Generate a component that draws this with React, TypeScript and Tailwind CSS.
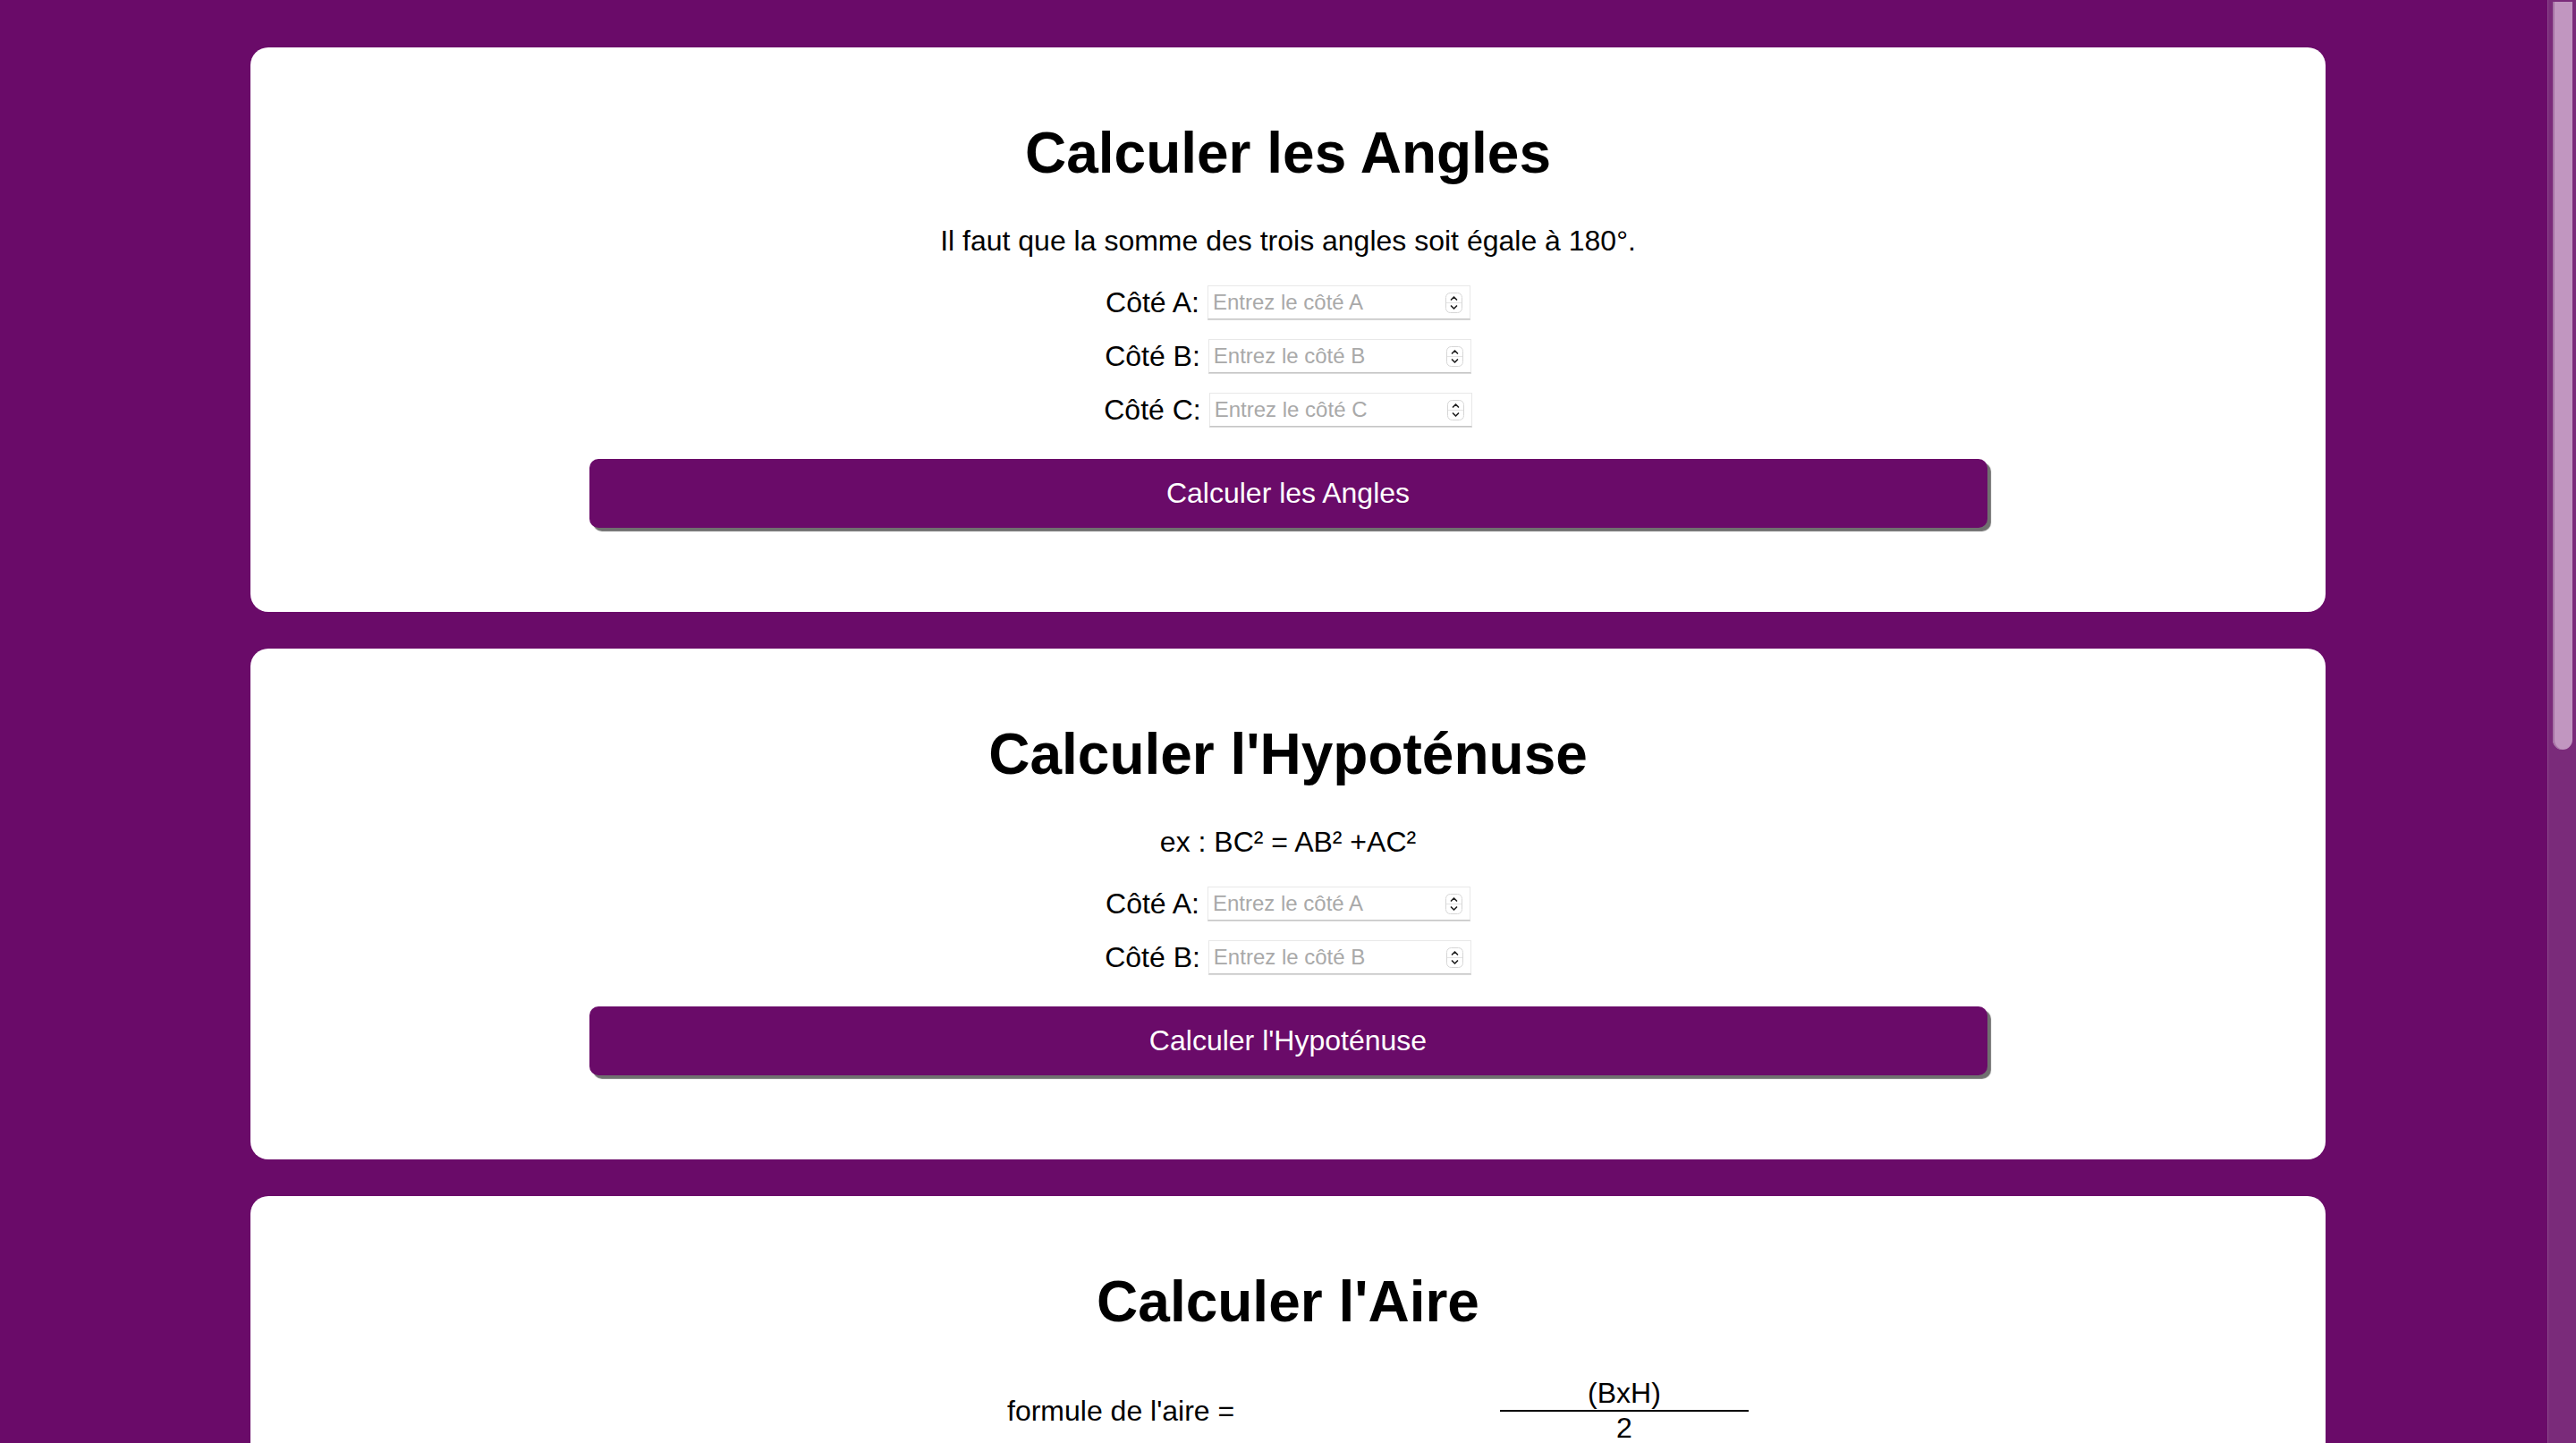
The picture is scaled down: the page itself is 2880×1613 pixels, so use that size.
import React from "react";

function Spinner() {
  return (
    <svg width="19" height="23" viewBox="0 0 19 23" className="shrink-0">
      <rect x="0.5" y="0.5" width="18" height="22" rx="5" fill="#fff" stroke="#d6d6d6" />
      <line x1="1" y1="11.5" x2="18" y2="11.5" stroke="#e4e4e4" />
      <path d="M6.5 8 L9.5 5 L12.5 8" fill="none" stroke="#222" strokeWidth="1.7" strokeLinecap="round" strokeLinejoin="round" />
      <path d="M6.5 15 L9.5 18 L12.5 15" fill="none" stroke="#222" strokeWidth="1.7" strokeLinecap="round" strokeLinejoin="round" />
    </svg>
  );
}

function Field({ label, placeholder }: { label: string; placeholder: string }) {
  return (
    <div className="flex h-[40px] items-center justify-center gap-[9px]">
      <label className="text-[32px] leading-[37px] text-black">{label}</label>
      <div className="flex h-[38px] w-[294px] items-center border border-[#e8e8e8] border-b-[#c6c6c6] bg-white pl-[5px] pr-[8px] shadow-[0_1px_0_#dadada]">
        <input
          type="text"
          placeholder={placeholder}
          className="min-w-0 flex-1 bg-transparent text-[24px] leading-[28px] text-black outline-none placeholder:text-[#a9a9a9]"
        />
        <Spinner />
      </div>
    </div>
  );
}

function CalcButton({ children }: { children: React.ReactNode }) {
  return (
    <button className="mt-[35px] h-[77px] w-[1563px] rounded-[10px] bg-[#6a0b69] text-[32px] leading-[37px] text-white shadow-[4px_4px_1px_#707070]">
      {children}
    </button>
  );
}

function Card({ title, children }: { title: string; children: React.ReactNode }) {
  return (
    <section className="ml-[280px] flex w-[2320px] shrink-0 flex-col items-center rounded-[20px] bg-white pt-[81px] pb-[94px]">
      <h1 className="text-[64px] font-bold leading-[74px] text-black">{title}</h1>
      {children}
    </section>
  );
}

export default function App() {
  return (
    <div className="flex h-[1613px] w-full overflow-hidden bg-[#6a0b69] font-['Liberation_Sans',Arial,sans-serif]">
      <main className="flex flex-1 flex-col gap-[41px] pt-[53px]">
        <Card title="Calculer les Angles">
          <p className="mt-[43px] text-[32px] leading-[37px] text-black">
            Il faut que la somme des trois angles soit égale à 180°.
          </p>
          <div className="mt-[30px] flex flex-col gap-[20px]">
            <Field label="Côté A:" placeholder="Entrez le côté A" />
            <Field label="Côté B:" placeholder="Entrez le côté B" />
            <Field label="Côté C:" placeholder="Entrez le côté C" />
          </div>
          <CalcButton>Calculer les Angles</CalcButton>
        </Card>

        <Card title="Calculer l'Hypoténuse">
          <p className="mt-[43px] text-[32px] leading-[37px] text-black">ex : BC² = AB² +AC²</p>
          <div className="mt-[30px] flex flex-col gap-[20px]">
            <Field label="Côté A:" placeholder="Entrez le côté A" />
            <Field label="Côté B:" placeholder="Entrez le côté B" />
          </div>
          <CalcButton>Calculer l'Hypoténuse</CalcButton>
        </Card>

        <Card title="Calculer l'Aire">
          <div className="mt-[47px] flex w-full items-center pl-[846px] text-[32px] leading-[37px] text-black">
            <span className="w-[551px]">formule de l'aire =</span>
            <div className="flex w-[278px] flex-col items-center">
              <span>(BxH)</span>
              <div className="h-[2px] w-full bg-black"></div>
              <span>2</span>
            </div>
          </div>
        </Card>
      </main>

      {/* scrollbar */}
      <div className="flex w-[32px] shrink-0 justify-center border-l border-[#8b4a8a] bg-[#7a2b7a] pt-[2px]">
        <div className="h-[836px] w-[22px] rounded-b-full rounded-t-[4px] bg-[#c196c0] shadow-[inset_2px_0_0_#a675a5]"></div>
      </div>
    </div>
  );
}
